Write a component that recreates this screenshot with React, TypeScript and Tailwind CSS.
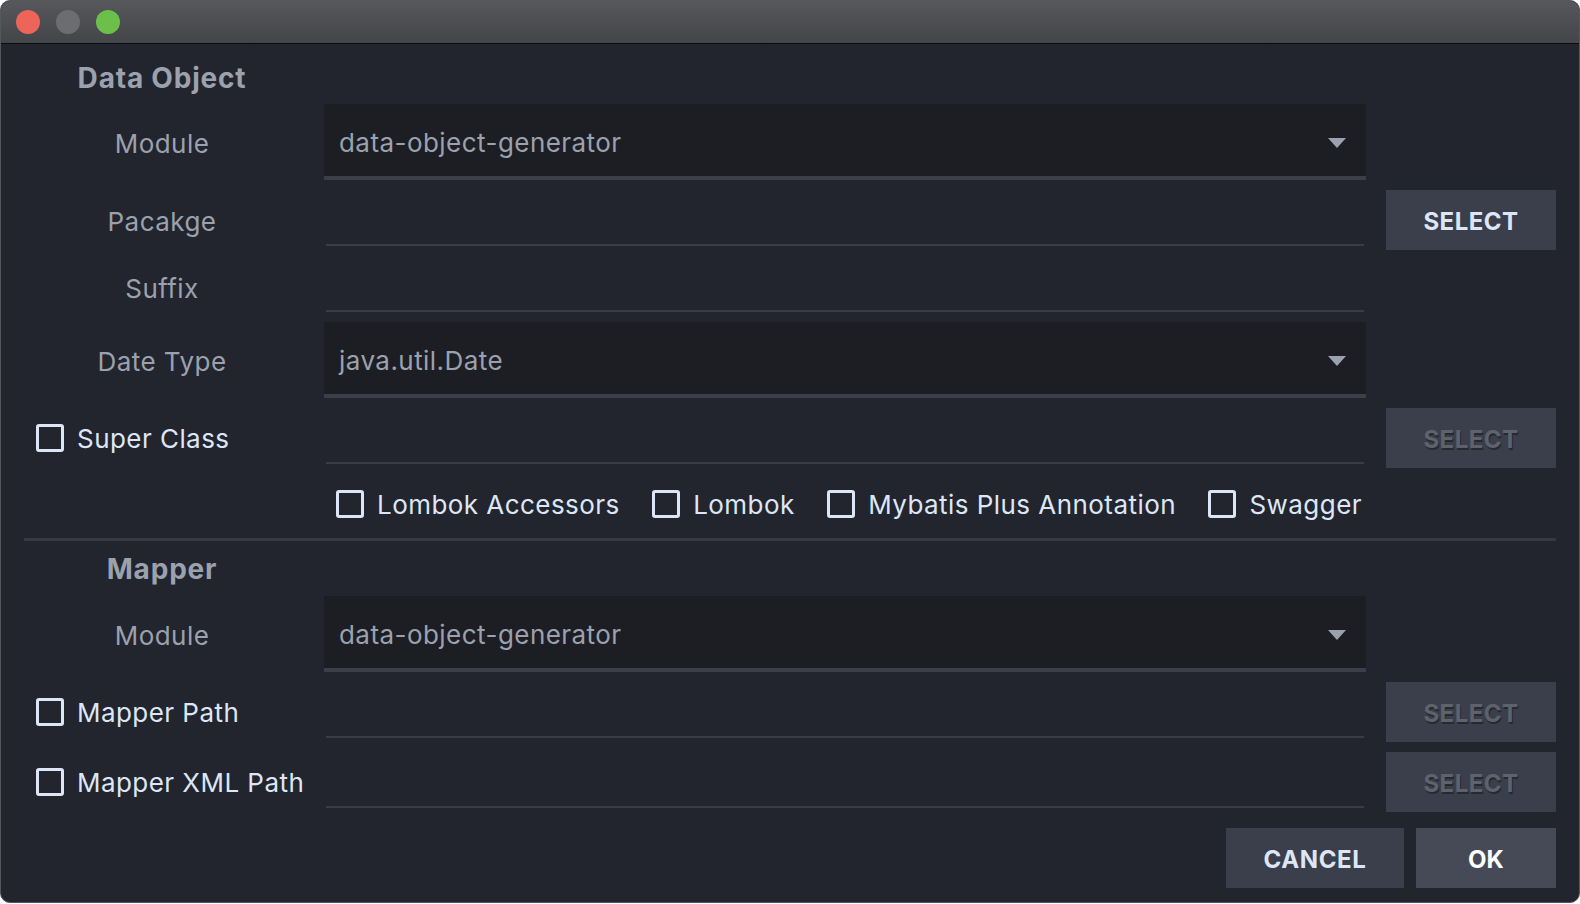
import React from "react";

const FONT = { fontFamily: "Inter, 'Noto Sans', 'Liberation Sans', sans-serif" };

function Label({ children }: { children: React.ReactNode }) {
  return (
    <div className="w-[276px] shrink-0 flex items-center justify-center pt-[3px] text-[26px] tracking-[0.45px] text-[#9ba1ae]">
      {children}
    </div>
  );
}

function CheckLabel({ children }: { children: React.ReactNode }) {
  return (
    <div className="w-[276px] shrink-0 flex items-center pl-[12px] gap-[13px] text-[26px] tracking-[0.45px] text-[#dde6f7]">
      <Box />
      <span className="whitespace-nowrap">{children}</span>
    </div>
  );
}

function Box() {
  return <div className="w-[28px] h-[28px] shrink-0 rounded-[3px] border-[3px] border-[#dde6f7]" />;
}

function Dropdown({ value }: { value: string }) {
  return (
    <div className="ml-[24px] w-[1042px] h-[76px] bg-[#1c1e23] border-b-4 border-[#3c3f4a] flex items-center justify-between pl-[15px] pr-[20px]">
      <span className="text-[26px] tracking-[0.45px] text-[#9ba1ae] mt-[4px]">{value}</span>
      <svg width="18" height="10" viewBox="0 0 18 10" className="mt-[6px]">
        <polygon points="0,0 18,0 9,10" fill="#9ba1ae" />
      </svg>
    </div>
  );
}

function Field({ h }: { h: string }) {
  return (
    <div className="ml-[24px] w-[1042px] px-[2px] self-start">
      <div className={`${h} border-b-2 border-[#3a3d48]`} />
    </div>
  );
}

function SelectBtn({ disabled }: { disabled?: boolean }) {
  return (
    <div
      className={
        disabled
          ? "ml-[20px] w-[170px] h-[60px] shrink-0 bg-[#3b3e4b] flex items-center justify-center pt-[3px] text-[24px] tracking-[0.5px] font-bold text-[#5e626d] [text-shadow:1px_2px_0_#272930]"
          : "ml-[20px] w-[170px] h-[60px] shrink-0 bg-[#3b3e4b] flex items-center justify-center pt-[3px] text-[24px] tracking-[0.5px] font-bold text-[#dde6f7]"
      }
    >
      SELECT
    </div>
  );
}

function Heading({ children, className }: { children: React.ReactNode; className: string }) {
  return (
    <div className={`${className} h-[44px] w-[276px] flex items-center justify-center text-[28px] tracking-[0.8px] font-bold text-[#9ba1ae]`}>
      {children}
    </div>
  );
}

function Opt({ children }: { children: React.ReactNode }) {
  return (
    <div className="flex items-center gap-[13px] text-[26px] tracking-[0.45px] text-[#dde6f7]">
      <Box />
      <span className="whitespace-nowrap">{children}</span>
    </div>
  );
}

export default function App() {
  return (
    <div className="w-[1580px] h-[904px] bg-white" style={FONT}>
      <div className="w-[1580px] h-[903px] rounded-[10px] overflow-hidden border border-[#55575c] bg-[#22252d] flex flex-col">
        <div className="h-[43px] shrink-0 bg-gradient-to-b from-[#56585b] to-[#434549] border-b border-[#0c0c0c] flex items-center gap-[16px] pl-[15px]">
          <div className="w-[24px] h-[24px] rounded-full bg-[#ed6458]" />
          <div className="w-[24px] h-[24px] rounded-full bg-[#6c6d70]" />
          <div className="w-[24px] h-[24px] rounded-full bg-[#6cc04a]" />
        </div>

        <div className="flex flex-col pl-[23px] pr-[23px]">
          <Heading className="mt-[12px]">Data Object</Heading>

          <div className="mt-[4px] h-[76px] flex">
            <Label>Module</Label>
            <Dropdown value="data-object-generator" />
          </div>

          <div className="mt-[8px] h-[64px] flex items-center">
            <Label>Pacakge</Label>
            <Field h="h-[58px]" />
            <SelectBtn />
          </div>

          <div className="h-[70px] flex items-center">
            <Label>Suffix</Label>
            <Field h="h-[60px]" />
          </div>

          <div className="h-[76px] flex">
            <Label>Date Type</Label>
            <Dropdown value="java.util.Date" />
          </div>

          <div className="mt-[10px] h-[60px] flex items-center">
            <CheckLabel>Super Class</CheckLabel>
            <Field h="h-[56px]" />
            <SelectBtn disabled />
          </div>

          <div className="mt-[8px] h-[56px] flex items-center">
            <div className="w-[276px] shrink-0" />
            <div className="ml-[24px] w-[1042px] flex items-center justify-between pl-[12px] pr-[4px]">
              <Opt>Lombok Accessors</Opt>
              <Opt>Lombok</Opt>
              <Opt>Mybatis Plus Annotation</Opt>
              <Opt>Swagger</Opt>
            </div>
          </div>

          <div className="mt-[6px] h-[3px] bg-[#363944]" />

          <Heading className="mt-[6px]">Mapper</Heading>

          <div className="mt-[5px] h-[76px] flex">
            <Label>Module</Label>
            <Dropdown value="data-object-generator" />
          </div>

          <div className="mt-[10px] h-[60px] flex items-center">
            <CheckLabel>Mapper Path</CheckLabel>
            <Field h="h-[56px]" />
            <SelectBtn disabled />
          </div>

          <div className="mt-[10px] h-[60px] flex items-center">
            <CheckLabel>Mapper XML Path</CheckLabel>
            <Field h="h-[56px]" />
            <SelectBtn disabled />
          </div>

          <div className="mt-[16px] h-[60px] flex justify-end gap-[12px]">
            <div className="w-[178px] h-[60px] bg-[#3b3e4b] flex items-center justify-center pt-[3px] text-[24px] tracking-[0.6px] font-bold text-[#dde6f7]">
              CANCEL
            </div>
            <div className="w-[140px] h-[60px] bg-[#464a57] flex items-center justify-center pt-[3px] text-[24px] font-bold text-white">
              OK
            </div>
          </div>
        </div>
      </div>
    </div>
  );
}
